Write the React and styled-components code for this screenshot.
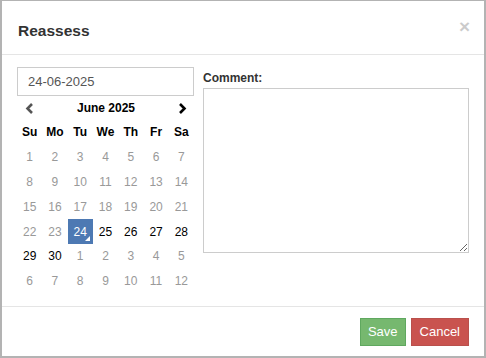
import styled, { createGlobalStyle } from 'styled-components';

const GlobalStyle = createGlobalStyle`
  html, body {
    margin: 0;
    padding: 0;
    background: #fff;
  }
  body {
    font-family: "Liberation Sans", Arial, sans-serif;
    font-size: 14px;
    color: #333;
  }
`;

const weekDays = ['Su', 'Mo', 'Tu', 'We', 'Th', 'Fr', 'Sa'];

const weeks = [
  [1, 2, 3, 4, 5, 6, 7].map((d) => ({ d, muted: true })),
  [8, 9, 10, 11, 12, 13, 14].map((d) => ({ d, muted: true })),
  [15, 16, 17, 18, 19, 20, 21].map((d) => ({ d, muted: true })),
  [
    { d: 22, muted: true },
    { d: 23, muted: true },
    { d: 24, active: true },
    { d: 25 },
    { d: 26 },
    { d: 27 },
    { d: 28 },
  ],
  [{ d: 29 }, { d: 30 }, ...[1, 2, 3, 4, 5].map((d) => ({ d, muted: true }))],
  [6, 7, 8, 9, 10, 11, 12].map((d) => ({ d, muted: true })),
];

const App = () => {
  return (
    <>
      <GlobalStyle />
      <Modal>
        <Header>
          <Title>Reassess</Title>
          <Close>×</Close>
        </Header>
        <Body>
          <LeftCol>
            <DateInput>24-06-2025</DateInput>
            <Calendar>
              <CalHead>
                <Arrow muted>
                  <svg width="9" height="11" viewBox="0 0 9 11">
                    <path d="M7 1 L2.5 5.5 L7 10" stroke="currentColor" strokeWidth="2.6" fill="none" />
                  </svg>
                </Arrow>
                <MonthTitle>June 2025</MonthTitle>
                <Arrow>
                  <svg width="9" height="11" viewBox="0 0 9 11">
                    <path d="M2 1 L6.5 5.5 L2 10" stroke="currentColor" strokeWidth="2.6" fill="none" />
                  </svg>
                </Arrow>
              </CalHead>
              <DayGrid>
                {weekDays.map((w) => (
                  <WeekDay key={w}>{w}</WeekDay>
                ))}
                {weeks.flat().map((c, i) => (
                  <Day key={i} muted={c.muted} active={c.active}>
                    {c.d}
                  </Day>
                ))}
              </DayGrid>
            </Calendar>
          </LeftCol>
          <RightCol>
            <Label>Comment:</Label>
            <Comment />
          </RightCol>
        </Body>
        <Footer>
          <Button variant="save">Save</Button>
          <Button variant="cancel">Cancel</Button>
        </Footer>
      </Modal>
    </>
  );
};

const Modal = styled.div`
  box-sizing: border-box;
  width: 486px;
  height: 358px;
  border: 1px solid #b3b3b3;
  border-left-width: 2px;
  border-bottom-width: 2px;
  border-right-width: 2px;
  background: #fff;
  display: flex;
  flex-direction: column;
`;

const Header = styled.div`
  height: 53px;
  padding: 0 16px;
  border-bottom: 1px solid #e5e5e5;
  display: flex;
  align-items: center;
  justify-content: space-between;
`;

const Title = styled.h4`
  margin: 0;
  margin-top: 6px;
  font-size: 15.5px;
  font-weight: bold;
  color: #333;
`;

const Close = styled.span`
  font-size: 19px;
  font-weight: bold;
  color: #000;
  opacity: 0.2;
  margin-top: -2px;
  margin-right: -2px;
`;

const Body = styled.div`
  flex: 1;
  padding: 12px 15px 0 15px;
  display: flex;
  gap: 9px;
`;

const LeftCol = styled.div`
  width: 177px;
  display: flex;
  flex-direction: column;
`;

const DateInput = styled.div`
  box-sizing: border-box;
  height: 29px;
  border: 1px solid #ccc;
  padding: 0 10px;
  display: flex;
  align-items: center;
  font-size: 13px;
  color: #555;
`;

const Calendar = styled.div`
  padding: 0;
`;

const CalHead = styled.div`
  height: 24px;
  display: flex;
  align-items: center;
  justify-content: space-between;
  padding: 0 7px 0 8px;
`;

const Arrow = styled.span`
  display: flex;
  color: ${({ muted }) => (muted ? '#555' : '#000')};
`;

const MonthTitle = styled.span`
  font-size: 12px;
  font-weight: bold;
  color: #000;
`;

const DayGrid = styled.div`
  display: grid;
  grid-template-columns: repeat(7, 1fr);
  grid-auto-rows: 24.8px;
`;

const WeekDay = styled.div`
  display: flex;
  align-items: center;
  justify-content: center;
  font-size: 12px;
  font-weight: bold;
  color: #000;
`;

const Day = styled.div`
  position: relative;
  display: flex;
  align-items: center;
  justify-content: center;
  font-size: 12px;
  color: ${({ muted, active }) => (active ? '#fff' : muted ? '#999' : '#000')};
  background: ${({ active }) => (active ? '#4d79b3' : 'transparent')};
  ${({ active }) =>
    active &&
    `
    &::after {
      content: '';
      position: absolute;
      right: 3px;
      bottom: 3px;
      border-left: 5px solid transparent;
      border-bottom: 5px solid #fff;
    }
  `}
`;

const RightCol = styled.div`
  flex: 1;
  display: flex;
  flex-direction: column;
`;

const Label = styled.label`
  font-size: 12px;
  font-weight: bold;
  color: #333;
  height: 21px;
  display: flex;
  align-items: center;
`;

const Comment = styled.textarea`
  box-sizing: border-box;
  height: 165px;
  width: 100%;
  border: 1px solid #ccc;
  margin: 0;
`;

const Footer = styled.div`
  height: 49px;
  border-top: 1px solid #e5e5e5;
  padding: 0 15px;
  display: flex;
  align-items: center;
  justify-content: flex-end;
  gap: 5px;
`;

const Button = styled.button`
  box-sizing: border-box;
  height: 28px;
  padding: 0 ${({ variant }) => (variant === 'save' ? '7px' : '8px')};
  border: 1px solid ${({ variant }) => (variant === 'save' ? '#5fa85f' : '#b9504c')};
  background: ${({ variant }) => (variant === 'save' ? '#76b86f' : '#c9534f')};
  color: #fff;
  font-family: "Liberation Sans", Arial, sans-serif;
  font-size: 13px;
`;

export default App;
